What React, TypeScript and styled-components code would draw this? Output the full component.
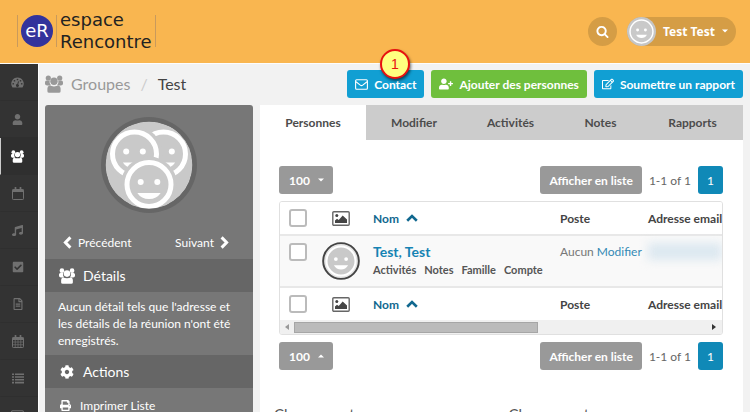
import React from "react";
import styled, { createGlobalStyle, css } from "styled-components";
import {
  FaCheckSquare,
  FaCog,
  FaMusic,
  FaPrint,
  FaRegEdit,
  FaRegFileAlt,
  FaUser,
  FaUserPlus,
} from "react-icons/fa";

const GlobalStyle = createGlobalStyle`
  *, *::before, *::after { box-sizing: border-box; }
  body {
    margin: 0;
    background: #f2f2f2;
    color: #444;
    font: 12px/17px Lato, "Noto Sans", sans-serif;
  }
  button { font: inherit; border: 0; cursor: pointer; }
  a { color: inherit; text-decoration: none; }
  svg { display: block; flex: none; }
`;

/* ---------- Icons ---------- */

const PeopleIcon = ({ size = 16 }: { size?: number }) => (
  <svg width={size} height={size} viewBox="0 0 18 18" fill="currentColor" aria-hidden="true">
    <circle cx="3.300" cy="3" r="2.600" />
    <circle cx="14.700" cy="3" r="2.600" />
    <path d="M0 7.400q0-1.800 1.600-1.800h3q-.5 3.400 1.400 5H2.200Q0 10.600 0 8.800z" />
    <path d="M18 7.400q0-1.800-1.600-1.800h-3q.5 3.400-1.400 5h3.800q2.200 0 2.200-1.800z" />
    <circle cx="9" cy="6.300" r="3.700" />
    <path d="M4.200 10.600q4.800 1.600 9.600 0 1.800.8 1.800 3v2.600q0 1.600-1.800 1.600H4.200q-1.800 0-1.800-1.600v-2.600q0-2.200 1.800-3z" />
  </svg>
);

const GaugeIcon = () => (
  <svg width="13" height="11" viewBox="0 0 26 22" aria-hidden="true">
    <path fill="currentColor" d="M13 1a12.500 12.500 0 0 0-10.600 19q.5 1 1.600 1h18q1.100 0 1.600-1A12.500 12.500 0 0 0 13 1z" />
    <g fill="#333">
      <circle cx="4.500" cy="13.500" r="1.700" />
      <circle cx="7" cy="7.500" r="1.700" />
      <circle cx="13" cy="5" r="1.700" />
      <circle cx="19" cy="7.500" r="1.700" />
      <circle cx="21.500" cy="13.500" r="1.700" />
      <path d="M14.200 8.500l1.800.5-1.500 5.500a3 3 0 1 1-1.900-.5z" />
    </g>
  </svg>
);

const CalendarIcon = ({ grid = false }: { grid?: boolean }) => (
  <svg width="12" height="13" viewBox="0 0 24 26" fill="none" stroke="currentColor" strokeWidth="2" aria-hidden="true">
    <rect x="1" y="5" width="22" height="20" rx="1.500" />
    <path d="M1 7.500h22" strokeWidth="5" />
    <path d="M7 1v6M17 1v6" strokeWidth="3.400" strokeLinecap="round" />
    {grid && <path d="M1 14h22M1 19.500h22M6.500 9v16M12 9v16M17.500 9v16" strokeWidth="1.400" />}
  </svg>
);

const ListIcon = () => (
  <svg width="12" height="11" viewBox="0 0 12 11" fill="none" stroke="currentColor" strokeWidth="1.600" aria-hidden="true">
    <path d="M0 1.200h2M3 1.200h9M0 4h2M3 4h9M0 6.800h2M3 6.800h9M0 9.600h2M3 9.600h9" />
  </svg>
);

const EnvelopeIcon = () => (
  <svg width="13" height="11" viewBox="0 0 26 22" fill="none" stroke="currentColor" strokeWidth="2.200" aria-hidden="true">
    <rect x="1.200" y="1.400" width="23.600" height="19" rx="2" />
    <path d="M2 5.500l8.600 6.800q2.400 1.800 4.800 0L24 5.500" />
  </svg>
);

const SearchIcon = () => (
  <svg width="13" height="13" viewBox="0 0 1792 1792" fill="currentColor" aria-hidden="true">
    <path d="M1216 832q0-185-131.500-316.500t-316.500-131.500-316.500 131.500-131.500 316.500 131.500 316.500 316.500 131.500 316.500-131.500 131.500-316.500zm512 832q0 52-38 90t-90 38q-54 0-90-38l-343-342q-179 124-399 124-143 0-273.500-55.500t-225-150-150-225-55.500-273.500 55.500-273.500 150-225 225-150 273.500-55.500 273.500 55.500 225 150 150 225 55.500 273.500q0 220-124 399l343 343q37 37 37 90z" />
  </svg>
);

const PictureIcon = () => (
  <svg width="18" height="15" viewBox="0 0 18 15" aria-hidden="true">
    <rect x=".8" y=".8" width="16.400" height="13.400" rx="1" fill="#fff" stroke="#666" strokeWidth="1.400" />
    <circle cx="4.800" cy="4.600" r="1.500" fill="#444" />
    <path d="M3 12V9.500l2-1.700 1.700 1.200 4-4.500L15 8.500V12z" fill="#444" />
  </svg>
);

const SortIcon = () => (
  <svg width="12" height="8" viewBox="0 0 12 8" fill="none" stroke="currentColor" strokeWidth="2.600" aria-hidden="true">
    <path d="M1.200 6.700L6 2l4.800 4.700" />
  </svg>
);

const Chevron = ({ right = false }: { right?: boolean }) => (
  <svg width="9" height="13" viewBox="0 0 9 13" fill="none" stroke="currentColor" strokeWidth="3" aria-hidden="true">
    <path d={right ? "M1.600 1.400l5 5.100-5 5.100" : "M7.400 1.400l-5 5.100 5 5.100"} />
  </svg>
);

const Caret = ({ up = false }: { up?: boolean }) => (
  <svg width="6" height="4" viewBox="0 0 6 4" fill="currentColor" aria-hidden="true">
    <path d={up ? "M0 3.500h6L3 .5z" : "M0 .5h6L3 3.500z"} />
  </svg>
);

const Smiley = ({ framed = false, size }: { framed?: boolean; size: number }) => (
  <svg width={size} height={size} viewBox="0 0 40 40" aria-hidden="true">
    <circle cx="20" cy="20" r={framed ? 19 : 20} fill={framed ? "#e4e4e4" : "#c6c6c6"} />
    {framed && <circle cx="20" cy="20" r="18.800" fill="none" stroke="#444" strokeWidth="2" />}
    <circle cx="20" cy="20" r={framed ? 15.200 : 15.800} fill="#c9c9c9" stroke="#fff" strokeWidth="2" />
    <circle cx="14.600" cy="18" r="2" fill="#fff" />
    <circle cx="25.400" cy="18" r="2" fill="#fff" />
    <path d="M12.500 24.500h15q-2.500 4.500-7.500 4.500t-7.500-4.500z" fill="#fff" />
  </svg>
);

const Face = ({ x, y }: { x: number; y: number }) => (
  <g transform={`translate(${x} ${y})`}>
    <circle r="28" fill="#c9c9c9" />
    <circle r="22" fill="none" stroke="#fff" strokeWidth="5" />
    <circle cx="-8.300" cy="-2.600" r="3" fill="#fff" />
    <circle cx="8.300" cy="-2.600" r="3" fill="#fff" />
    <path d="M-11.700 8.500h23.400q-4 6-11.700 6t-11.700-6z" fill="#fff" />
  </g>
);

const GroupAvatar = () => (
  <svg width="96" height="96" viewBox="0 0 96 96" role="img" aria-label="Groupe">
    <clipPath id="group-disc">
      <circle cx="48" cy="48" r="43.500" />
    </clipPath>
    <circle cx="48" cy="48" r="48" fill="#666" />
    <g clipPath="url(#group-disc)">
      <circle cx="48" cy="48" r="43.500" fill="#c9c9c9" />
      <Face x={62.500} y={37} />
      <Face x={33.500} y={37} />
      <Face x={48} y={67.500} />
    </g>
  </svg>
);

/* ---------- Header ---------- */

const Page = styled.div`
  display: flex;
  flex-direction: column;
  height: 100vh;
  overflow: hidden;
`;

const Header = styled.header`
  display: flex;
  align-items: center;
  justify-content: space-between;
  flex: none;
  height: 64px;
  padding: 0 14px 1px 17px;
  background: #f9b650;
  border-bottom: 1px solid #fdfdfd;
`;

const Logo = styled.a`
  display: flex;
  align-items: center;
  height: 32px;
  padding: 0 3px;
  border: solid #c99a5c;
  border-width: 0 1px;
`;

const LogoMark = styled.span`
  display: grid;
  place-items: center;
  width: 32px;
  height: 32px;
  border-radius: 50%;
  background: #33339c;
  color: #fff;
  font: 18px/30px "DejaVu Sans", sans-serif;
`;

const LogoName = styled.span`
  display: flex;
  flex-direction: column;
  justify-content: center;
  height: 32px;
  margin-left: 3px;
  padding-left: 3px;
  border-left: 1px solid #c99a5c;
  color: #222;
  font: 18px/22px "DejaVu Sans", sans-serif;
`;

const HeaderTools = styled.div`
  display: flex;
  gap: 10px;
`;

const SearchButton = styled.button`
  display: grid;
  place-items: center;
  width: 29px;
  height: 29px;
  padding: 0;
  border-radius: 50%;
  background: #d59d45;
  color: #fff;
`;

const UserButton = styled.button`
  display: flex;
  align-items: center;
  gap: 7px;
  height: 29px;
  padding: 0 8px 0 0;
  border-radius: 15px;
  background: #d59d45;
  color: #fff;
  font: bold 12px/17px "Noto Sans", sans-serif;
`;

/* ---------- Side navigation ---------- */

const Body = styled.div`
  display: flex;
  flex: 1;
  min-height: 0;
`;

const Rail = styled.nav`
  flex: none;
  width: 39px;
  overflow: hidden;
  background: #333;
  border-right: 1px solid #fff;
`;

const RailLink = styled.a<{ $active?: boolean }>`
  display: grid;
  place-items: center;
  height: 37px;
  padding-right: 4px;
  border-bottom: 1px solid #2f2f2f;
  border-left: 1px solid ${(p) => (p.$active ? "#ccc" : "#333")};
  background: ${(p) => (p.$active ? "#2f2f2f" : "#333")};
  color: ${(p) => (p.$active ? "#fff" : "#707070")};
`;

/* ---------- Content ---------- */

const Content = styled.main`
  display: flex;
  flex-direction: column;
  flex: 1;
  min-width: 0;
  padding: 6px 7px 0 6px;
`;

const TitleBar = styled.div`
  display: flex;
  align-items: center;
  justify-content: space-between;
  flex: none;
  margin-bottom: 7px;
`;

const Crumbs = styled.h1`
  display: flex;
  align-items: center;
  gap: 10px;
  margin: 0;
  color: #999;
  font-size: 16px;
  font-weight: 400;
  line-height: 28px;

  a { display: flex; align-items: center; gap: 8px; }
  i { color: #ccc; font-style: normal; }
  strong { color: #444; font-weight: 400; }
`;

const Actions = styled.div`
  display: flex;
  gap: 7px;
`;

const buttonTone = {
  blue: "#119fd3",
  green: "#6fbf3d",
  grey: "#999",
  page: "#1089b7",
};

const Button = styled.button<{ $tone: keyof typeof buttonTone; $plain?: boolean }>`
  position: relative;
  display: flex;
  align-items: center;
  gap: 6px;
  height: 28px;
  padding: 0 8px;
  border-radius: 3px;
  background: ${(p) => buttonTone[p.$tone]};
  color: #fff;
  font-weight: ${(p) => (p.$plain ? 400 : 700)};
  white-space: nowrap;
`;

const Marker = styled.span`
  position: absolute;
  left: 50%;
  bottom: 19px;
  display: grid;
  place-items: center;
  width: 30px;
  height: 30px;
  margin-left: -6px;
  border: 2px solid #e8110f;
  border-radius: 50%;
  background: #ffff80;
  box-shadow: 1px 2px 3px rgba(0, 0, 0, 0.55);
  color: #e8110f;
  font: 14px/16px "Liberation Sans", sans-serif;
`;

const Columns = styled.div`
  display: flex;
  flex: 1;
  gap: 7px;
  min-height: 0;
`;

const Panel = styled.aside`
  flex: none;
  width: 208px;
  overflow: hidden;
  border-radius: 3px 3px 0 0;
  background: #777;
  color: #fff;
`;

const Portrait = styled.div`
  display: grid;
  justify-content: center;
  padding: 12px 0 21px;
`;

const Pager = styled.div`
  display: flex;
  justify-content: space-between;
  padding: 0 24px 8px 18px;

  a { display: flex; align-items: center; gap: 6px; }
`;

const PanelTitle = styled.h2`
  display: flex;
  align-items: center;
  gap: 8px;
  margin: 0;
  padding: 0 14px;
  background: #666;
  font-size: 14px;
  font-weight: 400;
  line-height: 33px;

  svg { width: 16px; }
`;

const PanelText = styled.p`
  margin: 0;
  padding: 6px 13px;
`;

const PanelLink = styled.a`
  display: flex;
  align-items: center;
  gap: 9px;
  padding: 9px 15px;
`;

const Sheet = styled.section`
  flex: 1;
  min-width: 0;
  background: #fff;
`;

const Tabs = styled.div`
  display: grid;
  grid-template-columns: 106fr 96fr 97fr 83fr 101fr;
`;

const Tab = styled.button<{ $active?: boolean }>`
  height: 35px;
  padding: 0;
  background: ${(p) => (p.$active ? "#fff" : "#ccc")};
  color: #4c4c4c;
  font-weight: 700;
`;

const SheetBody = styled.div`
  padding: 26px 20px 0 19px;
`;

const Toolbar = styled.div`
  display: flex;
  align-items: center;
  gap: 7px;
  color: #666;

  > button { padding: 0 9px; }
  > button:first-child { gap: 8px; margin-right: auto; padding: 0 9px 0 10px; }
`;

const ListFrame = styled.div`
  margin: 7px 0;
  overflow: hidden;
  border: 1px solid #e0e0e0;
  border-radius: 3px;
`;

const Table = styled.table`
  width: 100%;
  table-layout: fixed;
  border-collapse: collapse;
`;

const headingCell = css`
  height: 33px;
  padding: 0 0 0 8px;
  vertical-align: middle;
  font-weight: 700;
`;

const Cell = styled.td<{ $heading?: boolean }>`
  padding: 7px 0 0 8px;
  text-align: left;
  vertical-align: top;
  white-space: nowrap;
  ${(p) => p.$heading && headingCell}
`;

const Row = styled.tr<{ $tinted?: boolean }>`
  background: ${(p) => (p.$tinted ? "#f9f9f9" : "#fff")};
  border: solid #e8e8e8;
  border-width: ${(p) => (p.$tinted ? "2px 0" : "0")};
`;

const PhotoCell = styled(Cell)`
  padding: 6px 5px;
`;

const PictureHolder = styled.span`
  display: flex;
  justify-content: center;
  padding-right: 8px;
`;

const Tick = styled.input`
  appearance: none;
  display: block;
  width: 18px;
  height: 18px;
  margin: 0 0 0 1px;
  border: 2px solid #bbb;
  border-radius: 3px;
  background: #fff;
`;

const SortLink = styled.a`
  display: flex;
  align-items: center;
  gap: 7px;
  color: #11688f;
`;

const PersonLink = styled.a`
  color: #1583b3;
  font-size: 14px;
  font-weight: 700;
`;

const PersonMenu = styled.div`
  display: flex;
  gap: 8px;
  color: #555;
  font-size: 11px;
  font-weight: 700;
  line-height: 18px;
`;

const Assignment = styled.span`
  color: #777;
  a { color: #3489b5; }
`;

const HiddenAddress = styled.span`
  display: block;
  height: 17px;
  background: #dce8f0;
  filter: blur(5px);
`;

const ScrollTrack = styled.div`
  display: flex;
  align-items: center;
  gap: 5px;
  height: 14px;
  padding: 0 6px 0 5px;
  background: #f0f0f0;
`;

const ScrollLane = styled.div`
  flex: 1;
`;

const ScrollThumb = styled.div`
  width: 59%;
  height: 11px;
  border: 1px solid #a6a6a6;
  background: #bbb;
`;

const Pending = styled.div`
  display: grid;
  grid-template-columns: 1fr 1fr;
  padding: 32px 0 0 14px;
  color: #555;
  font-size: 15px;
  line-height: 24px;
`;

/* ---------- Page parts ---------- */

const ListToolbar = ({ up }: { up?: boolean }) => (
  <Toolbar>
    <Button $tone="grey">
      100 <Caret up={up} />
    </Button>
    <Button $tone="grey">Afficher en liste</Button>
    <span>1-1 of 1</span>
    <Button $tone="page" $plain>
      1
    </Button>
  </Toolbar>
);

const HeadingRow = ({ label }: { label: string }) => (
  <Row>
    <Cell as="th" $heading>
      <Tick type="checkbox" aria-label={label} />
    </Cell>
    <Cell as="th" $heading>
      <PictureHolder>
        <PictureIcon />
      </PictureHolder>
    </Cell>
    <Cell as="th" $heading>
      <SortLink href="#nom">
        Nom <SortIcon />
      </SortLink>
    </Cell>
    <Cell as="th" $heading>
      Poste
    </Cell>
    <Cell as="th" $heading>
      Adresse email
    </Cell>
  </Row>
);

const railItems = [
  { name: "Tableau de bord", icon: <GaugeIcon /> },
  { name: "Personnes", icon: <FaUser size={11} /> },
  { name: "Groupes", icon: <PeopleIcon size={13} />, active: true },
  { name: "Calendrier", icon: <CalendarIcon /> },
  { name: "Musique", icon: <FaMusic size={11} /> },
  { name: "Tâches", icon: <FaCheckSquare size={12} /> },
  { name: "Documents", icon: <FaRegFileAlt size={12} /> },
  { name: "Planning", icon: <CalendarIcon grid /> },
  { name: "Listes", icon: <ListIcon /> },
  { name: "Messages", icon: <EnvelopeIcon /> },
];

export default function App() {
  return (
    <Page>
      <GlobalStyle />
      <Header>
        <Logo href="#accueil">
          <LogoMark>eR</LogoMark>
          <LogoName>
            <span>espace</span>
            <span>Rencontre</span>
          </LogoName>
        </Logo>
        <HeaderTools>
          <SearchButton aria-label="Rechercher">
            <SearchIcon />
          </SearchButton>
          <UserButton>
            <Smiley size={29} />
            Test Test
            <Caret />
          </UserButton>
        </HeaderTools>
      </Header>
      <Body>
        <Rail>
          {railItems.map((item) => (
            <RailLink key={item.name} href="#menu" aria-label={item.name} $active={item.active}>
              {item.icon}
            </RailLink>
          ))}
        </Rail>
        <Content>
          <TitleBar>
            <Crumbs>
              <a href="#groupes">
                <PeopleIcon size={18} />
                Groupes
              </a>
              <i>/</i>
              <strong>Test</strong>
            </Crumbs>
            <Actions>
              <Button $tone="blue">
                <EnvelopeIcon />
                Contact
                <Marker>1</Marker>
              </Button>
              <Button $tone="green">
                <FaUserPlus size={14} />
                Ajouter des personnes
              </Button>
              <Button $tone="blue">
                <FaRegEdit size={12} />
                Soumettre un rapport
              </Button>
            </Actions>
          </TitleBar>
          <Columns>
            <Panel>
              <Portrait>
                <GroupAvatar />
              </Portrait>
              <Pager>
                <a href="#precedent">
                  <Chevron />
                  Précédent
                </a>
                <a href="#suivant">
                  Suivant
                  <Chevron right />
                </a>
              </Pager>
              <PanelTitle>
                <PeopleIcon />
                Détails
              </PanelTitle>
              <PanelText>
                Aucun détail tels que l'adresse et les détails de la réunion n'ont été enregistrés.
              </PanelText>
              <PanelTitle>
                <FaCog size={14} />
                Actions
              </PanelTitle>
              <PanelLink href="#imprimer">
                <FaPrint size={11} />
                Imprimer Liste
              </PanelLink>
            </Panel>
            <Sheet>
              <Tabs role="tablist">
                <Tab role="tab" aria-selected $active>
                  Personnes
                </Tab>
                <Tab role="tab">Modifier</Tab>
                <Tab role="tab">Activités</Tab>
                <Tab role="tab">Notes</Tab>
                <Tab role="tab">Rapports</Tab>
              </Tabs>
              <SheetBody>
                <ListToolbar />
                <ListFrame>
                  <Table>
                    <colgroup>
                      <col width="37" />
                      <col width="48" />
                      <col width="187" />
                      <col width="88" />
                      <col />
                    </colgroup>
                    <thead>
                      <HeadingRow label="Tout sélectionner" />
                    </thead>
                    <tbody>
                      <Row $tinted>
                        <Cell>
                          <Tick type="checkbox" aria-label="Sélectionner Test, Test" />
                        </Cell>
                        <PhotoCell>
                          <Smiley framed size={38} />
                        </PhotoCell>
                        <Cell>
                          <PersonLink href="#test">Test, Test</PersonLink>
                          <PersonMenu>
                            <a href="#activites">Activités</a>
                            <a href="#notes">Notes</a>
                            <a href="#famille">Famille</a>
                            <a href="#compte">Compte</a>
                          </PersonMenu>
                        </Cell>
                        <Cell>
                          <Assignment>
                            Aucun <a href="#modifier">Modifier</a>
                          </Assignment>
                        </Cell>
                        <Cell>
                          <HiddenAddress />
                        </Cell>
                      </Row>
                    </tbody>
                    <tfoot>
                      <HeadingRow label="Sélectionner toute la liste" />
                    </tfoot>
                  </Table>
                  <ScrollTrack>
                    <svg width="4" height="6" viewBox="0 0 4 6" aria-hidden="true">
                      <path d="M4 0v6L0 3z" fill="#999" />
                    </svg>
                    <ScrollLane>
                      <ScrollThumb />
                    </ScrollLane>
                    <svg width="4" height="6" viewBox="0 0 4 6" aria-hidden="true">
                      <path d="M0 0v6l4-3z" fill="#333" />
                    </svg>
                  </ScrollTrack>
                </ListFrame>
                <ListToolbar up />
              </SheetBody>
              <Pending>
                <span>Chargement</span>
                <span>Chargement</span>
              </Pending>
            </Sheet>
          </Columns>
        </Content>
      </Body>
    </Page>
  );
}
